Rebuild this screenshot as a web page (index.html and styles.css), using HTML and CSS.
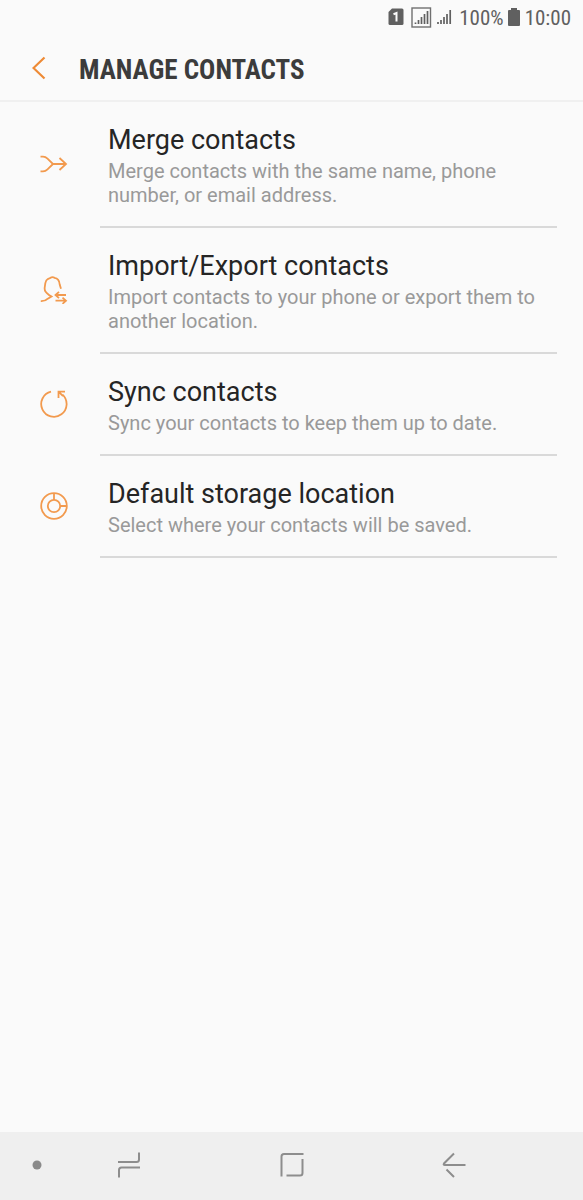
FILE: index.html
```html
<!DOCTYPE html>
<html lang="en">
<head>
<meta charset="utf-8">
<meta name="viewport" content="width=device-width, initial-scale=1">
<title>Manage contacts</title>
<link rel="stylesheet" href="styles.css">
</head>
<body>
<div class="screen">
  <div class="status">
    <svg class="sim" width="16" height="18" viewBox="0 0 16 18" aria-hidden="true"><path d="M4 .500h10q1.500 0 1.500 1.500v13.500q0 1.500-1.500 1.500H2Q.500 17 .500 15.500V4z" fill="#606060"/><path d="M5.500 6.200 8.500 5v8.500" fill="none" stroke="#fafafa" stroke-width="2"/></svg>
    <svg class="boxed" width="21" height="21" viewBox="0 0 21 21" aria-hidden="true"><rect x="1" y="1" width="18.500" height="19" fill="none" stroke="#707070" stroke-width="1.4"/><path d="M4.500 17v-1.500M7.500 17v-4M10.500 17v-7M13.500 17V7M16.500 17V4" stroke="#606060" stroke-width="1.700"/></svg>
    <svg class="signal" width="15" height="16" viewBox="0 0 15 16" aria-hidden="true"><path d="M1 15v-2M4 15v-4M7 15V8M10 15V5M13.200 15V1" stroke="#606060" stroke-width="1.700"/></svg>
    <span class="reading">100%</span>
    <svg class="battery" width="12" height="18" viewBox="0 0 12 18" aria-hidden="true"><path d="M3 0h6v2h2q1 0 1 1v14q0 1-1 1H1q-1 0-1-1V3q0-1 1-1h2z" fill="#606060"/></svg>
    <time class="reading">10:00</time>
  </div>
  <header class="header">
    <button class="back" type="button" aria-label="Navigate up"><svg width="14" height="24" viewBox="0 0 14 24"><path d="M12.500 1.500 1.500 12l11 10.500" fill="none" stroke="#ee8a35" stroke-width="2.200"/></svg></button>
    <h1 class="title">MANAGE CONTACTS</h1>
  </header>
  <main class="list">
    <a class="item" href="#merge">
      <svg class="icon" viewBox="0 0 28 28" aria-hidden="true"><path d="M.500 6.700H3q2.500 0 4.500 2L13 14h13M.500 21.300H3q2.500 0 4.500-2L13 14M19.500 8l6.500 6-6.500 6"/></svg>
      <span class="text"><span class="name">Merge contacts</span><span class="detail">Merge contacts with the same name, phone number, or email address.</span></span>
    </a>
    <a class="item" href="#import-export">
      <svg class="icon" viewBox="0 0 28 28" aria-hidden="true"><path d="M.800 25.200q4.500.200 7-2.500L11.500 20.500 9.500 19.300C6.500 17 4.200 15.500 4.700 11.500 5.300 4.500 6.500 2.800 10.500 1.800q2-1.500 4 0c4 .500 5 3.500 5.200 6.700l1.300 4.300M15.500 19H26M19 15.900l-3.500 3.100 3.500 3.100M15.500 24.700H26M22.500 21.600l3.500 3.100-3.500 3.100"/></svg>
      <span class="text"><span class="name">Import/Export contacts</span><span class="detail">Import contacts to your phone or export them to another location.</span></span>
    </a>
    <a class="item" href="#sync">
      <svg class="icon" viewBox="0 0 28 28" aria-hidden="true"><path d="M11 1.700A12.700 12.700 0 1 0 22.500 4.700M18.500 8V1.700H25M18.700 1.900 23 6"/></svg>
      <span class="text"><span class="name">Sync contacts</span><span class="detail">Sync your contacts to keep them up to date.</span></span>
    </a>
    <a class="item" href="#storage">
      <svg class="icon" viewBox="0 0 28 28" aria-hidden="true"><circle cx="14" cy="14" r="12.800"/><circle cx="14" cy="14" r="6.200"/><path d="M14 1v7M20 14h7"/></svg>
      <span class="text"><span class="name">Default storage location</span><span class="detail">Select where your contacts will be saved.</span></span>
    </a>
  </main>
  <nav class="navbar" aria-label="System navigation">
    <button class="key" type="button" aria-label="Hide navigation bar"><svg width="10" height="10" viewBox="0 0 10 10"><circle cx="5" cy="5" r="4.500" fill="#8a8a8a"/></svg></button>
    <button class="key" type="button" aria-label="Recent apps"><svg class="line" width="24" height="26" viewBox="0 0 24 26"><path d="M1 10h18.500q2.500 0 2.500-2.500V.500M23 15.500H4.500Q2 15.500 2 18v7.500"/></svg></button>
    <button class="key" type="button" aria-label="Home"><svg class="line" width="24" height="26" viewBox="0 0 24 26"><path d="M1.500 24.500V4.500Q1.500 2 4 2h19.500M22.500 7v14q0 2.500-2.500 2.500H6.500"/></svg></button>
    <button class="key" type="button" aria-label="Back"><svg class="line" width="24" height="26" viewBox="0 0 24 26"><path d="M12 1.500 2 11.500q-1 1.500.8 1.500H23.500M4.500 17.500 12 25"/></svg></button>
  </nav>
</div>
</body>
</html>
```
FILE: styles.css
```css
* { box-sizing: border-box; }
body {
  margin: 0;
  background: #fafafa;
  color: #252525;
  font-family: Roboto, "Liberation Sans", sans-serif;
}
svg { display: block; flex: none; }
button { border: 0; padding: 0; background: none; }
.screen { display: flex; flex-direction: column; min-height: 100vh; }
.status {
  display: flex;
  align-items: center;
  justify-content: flex-end;
  height: 36px;
  padding: 0 12px 2px 0;
  color: #606060;
  font-family: "Roboto Condensed", Roboto, sans-serif;
  font-size: 21px;
  line-height: 24px;
}
.reading { padding-top: 2px; }
.sim { margin-right: 7px; }
.boxed { margin-right: 5px; }
.signal { margin-right: 7px; }
.battery { margin: 0 5px 0 4px; }
.header {
  display: flex;
  align-items: center;
  height: 66px;
  border-bottom: 2px solid #f0f0f0;
}
.back { display: flex; justify-content: center; width: 78px; }
.title {
  margin: 0;
  padding: 4px 0 0 1px;
  color: #3c3c3c;
  font-family: "Roboto Condensed", Roboto, sans-serif;
  font-size: 27px;
  font-weight: 700;
  line-height: 32px;
}
.list { flex: 1; }
.item {
  display: flex;
  align-items: center;
  padding: 0 26px 0 40px;
  color: inherit;
  text-decoration: none;
}
.icon {
  width: 28px;
  height: 28px;
  margin: 0 32px 2px 0;
  fill: none;
  stroke: #f29a4e;
  stroke-width: 1.8;
}
.text {
  display: flex;
  flex: 1;
  flex-direction: column;
  gap: 3px;
  padding: 22px 8px 19px;
  border-bottom: 2px solid #d9d9d9;
}
.name { font-size: 27px; line-height: 32px; }
.detail { color: #999; font-size: 20px; line-height: 24px; }
.navbar {
  display: grid;
  grid-template-columns: 74px 110px 1fr 110px 74px;
  height: 68px;
  padding-bottom: 2px;
  background: #efefef;
}
.key { display: grid; place-items: center; }
.line { fill: none; stroke: #8d8d8d; stroke-width: 2; }
```
